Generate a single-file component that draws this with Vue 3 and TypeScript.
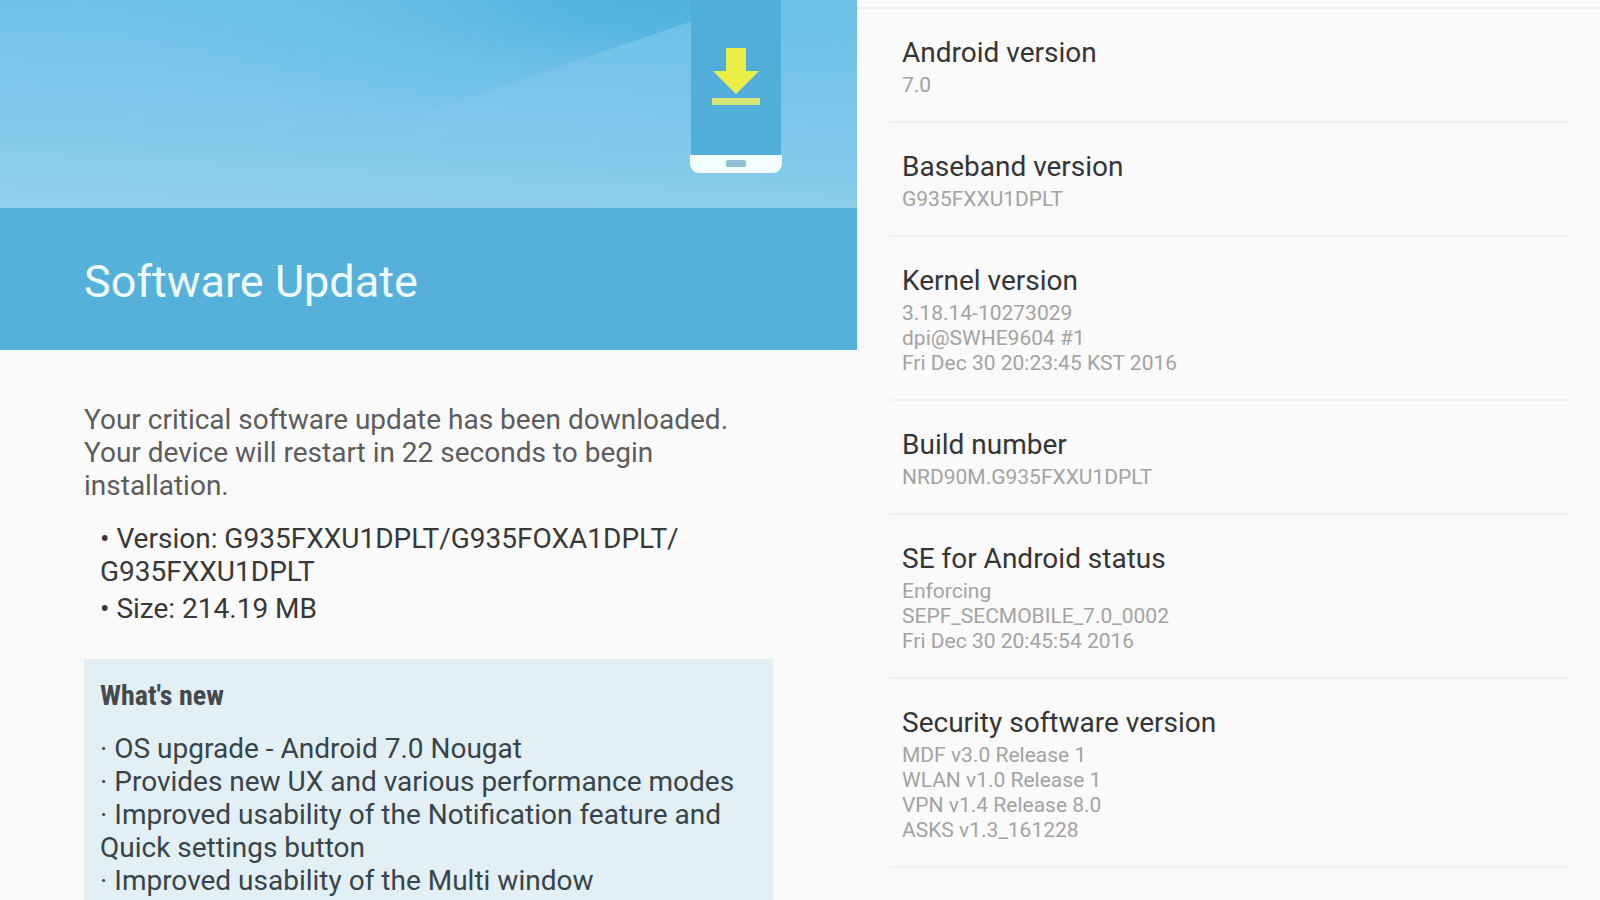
<script setup lang="ts">
interface InfoItem {
  title: string
  lines: string[]
}

const details: string[] = [
  'Version: G935FXXU1DPLT/G935FOXA1DPLT/\u200bG935FXXU1DPLT',
  'Size: 214.19 MB',
]

const news: string[] = [
  'OS upgrade - Android 7.0 Nougat',
  'Provides new UX and various performance modes',
  'Improved usability of the Notification feature and Quick settings button',
  'Improved usability of the Multi window',
]

const info: InfoItem[] = [
  { title: 'Android version', lines: ['7.0'] },
  { title: 'Baseband version', lines: ['G935FXXU1DPLT'] },
  { title: 'Kernel version', lines: ['3.18.14-10273029', 'dpi@SWHE9604 #1', 'Fri Dec 30 20:23:45 KST 2016'] },
  { title: 'Build number', lines: ['NRD90M.G935FXXU1DPLT'] },
  { title: 'SE for Android status', lines: ['Enforcing', 'SEPF_SECMOBILE_7.0_0002', 'Fri Dec 30 20:45:54 2016'] },
  {
    title: 'Security software version',
    lines: ['MDF v3.0 Release 1', 'WLAN v1.0 Release 1', 'VPN v1.4 Release 8.0', 'ASKS v1.3_161228'],
  },
]
</script>

<template>
  <main class="screen">
    <section class="update">
      <div class="hero">
        <svg class="rays" viewBox="0 0 857 208" preserveAspectRatio="none" aria-hidden="true">
          <defs>
            <radialGradient
              id="ray"
              gradientUnits="userSpaceOnUse"
              cx="0"
              cy="0"
              r="1"
              gradientTransform="translate(670 0) scale(560 150)"
            >
              <stop offset="0" stop-color="#52b3df" />
              <stop offset="0.2" stop-color="#54b4e0" stop-opacity="0.9" />
              <stop offset="0.5" stop-color="#5ab8e2" stop-opacity="0.4" />
              <stop offset="1" stop-color="#6cbfe5" stop-opacity="0" />
            </radialGradient>
          </defs>
          <path d="M0 0H740V5L690 22L420 114L200 190H0Z" fill="url(#ray)" />
        </svg>
        <svg class="phone" viewBox="0 0 92 173" aria-hidden="true">
          <rect x="1" y="0" width="90" height="156" fill="#50aed8" />
          <path d="M0 155H92V164Q91 173 82 173H10Q1 173 0 164Z" fill="#f2feff" />
          <rect x="36" y="160" width="20" height="7" rx="2" fill="#8fbfd2" />
          <path d="M36 48H56V71H69L46 94L23 71H36Z" fill="#e9ed45" />
          <rect x="22" y="98" width="48" height="7" fill="#d6e776" />
        </svg>
      </div>
      <header class="banner">
        <h1>Software Update</h1>
      </header>
      <div class="body">
        <p class="message">
          Your critical software update has been downloaded. Your device will restart in 22 seconds to begin
          installation.
        </p>
        <ul class="details">
          <li v-for="item in details" :key="item">• {{ item }}</li>
        </ul>
        <section class="news">
          <h2>What's new</h2>
          <ul>
            <li v-for="item in news" :key="item">· {{ item }}</li>
          </ul>
        </section>
      </div>
    </section>

    <section class="about">
      <dl>
        <div v-for="item in info" :key="item.title" class="row">
          <dt>{{ item.title }}</dt>
          <dd v-for="line in item.lines" :key="line">{{ line }}</dd>
        </div>
      </dl>
    </section>
  </main>
</template>

<style>
body {
  margin: 0;
  background: #fafafa;
}
</style>

<style scoped>
.screen {
  display: grid;
  grid-template-columns: 857fr 743fr;
  height: 100vh;
  overflow: hidden;
  background: #fafafa;
  font-family: Roboto, "Noto Sans", sans-serif;
}
h1, h2, p, ul, dl, dt, dd {
  margin: 0;
  padding: 0;
  font-weight: 400;
}
ul {
  list-style: none;
}
.update,
.about {
  min-width: 0;
}
.hero {
  position: relative;
  display: flex;
  justify-content: flex-end;
  height: 208px;
  padding-right: 75px;
  background: linear-gradient(183deg, #6dc0e6 0%, #7cc6e9 50%, #92cfeb 100%);
}
.rays {
  position: absolute;
  inset: 0;
  width: 100%;
  height: 100%;
}
.phone {
  position: relative;
  width: 92px;
  height: 173px;
}
.banner {
  padding: 47px 84px 41px;
  background: #56b1da;
}
h1 {
  color: #effcff;
  font-size: 45px;
  line-height: 54px;
}
.body {
  padding: 53px 84px 0;
  font-size: 28px;
  line-height: 33px;
}
.message {
  color: #5c5c5c;
}
.details {
  padding: 20px 16px 0;
  color: #383838;
}
.details li + li {
  margin-top: 4px;
}
.news {
  margin-top: 34px;
  padding: 20px 16px 40px;
  background: #e2eff5;
  color: #37444a;
}
h2 {
  margin-bottom: 20px;
  color: #45494d;
  font-family: "Roboto Condensed", "Liberation Sans Narrow", Roboto, sans-serif;
  font-size: 28px;
  font-weight: 700;
}
.about dl {
  margin-top: 7px;
  border-top: 2px solid #efefef;
}
.row {
  margin: 0 32px 0 33px;
  padding: 27px 12px 23px;
  border-bottom: 2px solid #f1f1f1;
}
dt {
  margin-bottom: 4px;
  color: #353535;
  font-size: 28px;
  line-height: 33px;
}
dd {
  color: #a3a3a3;
  font-size: 21px;
  line-height: 25px;
}
</style>
